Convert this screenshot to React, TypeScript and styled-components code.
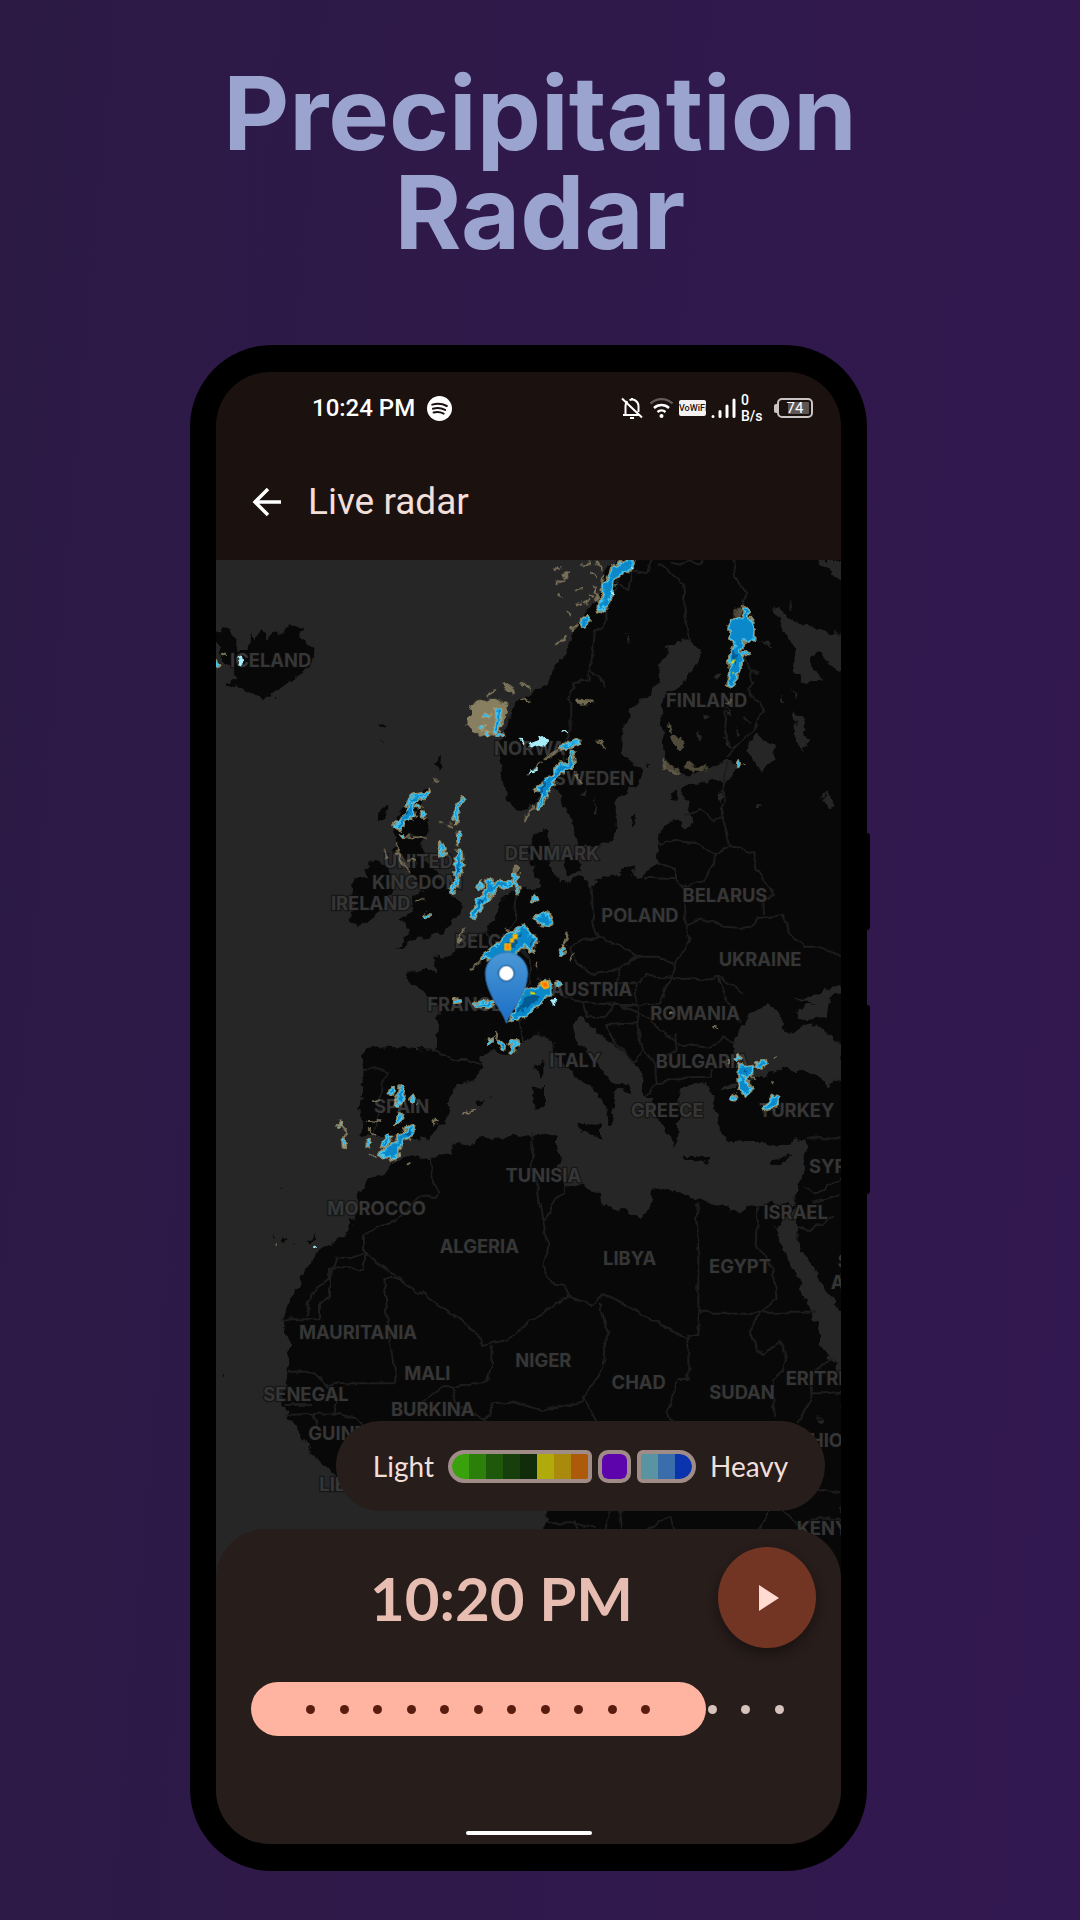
import React, { useState } from 'react';
import styled, { createGlobalStyle } from 'styled-components';

const GlobalStyle = createGlobalStyle`
  *, *::before, *::after { box-sizing: border-box; }
  body {
    margin: 0;
    font-family: Roboto, "Noto Sans", sans-serif;
    background: #2f194b;
  }
`;

const Page = styled.main`
  display: flex;
  flex-direction: column;
  align-items: center;
  min-height: 100vh;
  padding: 64px 0 49px;
  background: linear-gradient(95deg, #2c1a45 0%, #2f194b 50%, #321850 100%);
`;

const Title = styled.h1`
  max-width: 800px;
  margin: 0 0 83px;
  color: #9ba3cf;
  font: 700 102px/99px Inter, "Open Sans", sans-serif;
  text-align: center;
`;

const Stage = styled.div`
  display: flex;
  flex: 1;
  justify-content: center;
  width: 100%;
  padding-right: 23px;
`;

const Phone = styled.div`
  position: relative;
  display: flex;
  width: 100%;
  max-width: 677px;
  padding: 27px 26px;
  border-radius: 82px;
  background: #000;
`;

const SideKey = styled.span<{ $top: number; $height: number }>`
  position: absolute;
  right: -3px;
  top: ${p => p.$top}px;
  width: 8px;
  height: ${p => p.$height}px;
  border-radius: 3px;
  background: #000;
`;

const Screen = styled.section`
  display: flex;
  flex: 1;
  flex-direction: column;
  min-width: 0;
  overflow: hidden;
  border-radius: 54px;
  background: #1b110f;
`;

const StatusBar = styled.div`
  display: flex;
  align-items: center;
  height: 72px;
  padding: 0 28px 0 96px;
  color: #fff;
`;

const Clock = styled.time`
  margin-right: 12px;
  font-size: 24px;
  font-weight: 500;
  line-height: 30px;
`;

const StatusIcons = styled.div`
  display: flex;
  align-items: center;
  gap: 5px;
  margin-left: auto;
`;

const VoWifi = styled.span`
  width: 27px;
  height: 16px;
  border-radius: 2px;
  background: #f4f1f0;
  color: #1b110f;
  font: 500 9px/16px Roboto, sans-serif;
  text-align: center;
`;

const NetSpeed = styled.span`
  display: flex;
  flex-direction: column;
  width: 28px;
  font-size: 14px;
  font-weight: 500;
  line-height: 16px;
`;

const Battery = styled.span`
  display: flex;
  align-items: center;
  &::before {
    content: "";
    width: 3px;
    height: 9px;
    border-radius: 2px 0 0 2px;
    background: #c9c4c3;
  }
`;

const BatteryBody = styled.span`
  width: 36px;
  height: 20px;
  padding: 2px;
  border: 2px solid #c9c4c3;
  border-radius: 5px;
  color: #fff;
  font-size: 15px;
  line-height: 13px;
  text-align: center;
  background: linear-gradient(90deg, transparent 7px, #5d5655 7px) content-box;
`;

const AppBar = styled.header`
  display: flex;
  align-items: center;
  height: 116px;
  padding: 0 32px;
`;

const BackButton = styled.button`
  display: grid;
  place-items: center;
  width: 38px;
  height: 48px;
  margin-right: 22px;
  padding: 0;
  border: 0;
  background: none;
  cursor: pointer;
`;

const ScreenTitle = styled.h2`
  margin: 0;
  color: #f1dfda;
  font-size: 37px;
  font-weight: 400;
  line-height: 48px;
`;

const MapArea = styled.div`
  position: relative;
  flex: 1;
  min-height: 560px;
  background: #262626;
`;

const MapCanvas = styled.svg`
  position: absolute;
  inset: 0;
  width: 100%;
  height: 100%;
`;

const CountryName = styled.text`
  fill: #363636;
  stroke: #0d0d0d;
  stroke-width: 8px;
  stroke-opacity: 0.6;
  paint-order: stroke;
  font: 700 55px Inter, "Open Sans", sans-serif;
`;

const Legend = styled.div`
  position: absolute;
  right: 16px;
  bottom: 70px;
  display: flex;
  align-items: center;
  justify-content: center;
  gap: 14px;
  width: 489px;
  max-width: calc(100% - 32px);
  height: 90px;
  border-radius: 45px;
  background: #271d1b;
  color: #f1dfda;
  font: 400 28px/36px Lato, sans-serif;
`;

const Scale = styled.div`
  display: flex;
  gap: 6px;
`;

const ScaleGroup = styled.div<{ $radius: string }>`
  display: flex;
  height: 33px;
  overflow: hidden;
  border: 4px solid #a08c87;
  border-radius: ${p => p.$radius};
  background: #a08c87;
`;

const Swatch = styled.span<{ $color: string; $width: number; $radius: string }>`
  width: ${p => p.$width}px;
  border-radius: ${p => p.$radius};
  background: ${p => p.$color};
`;

const Sheet = styled.footer`
  position: relative;
  display: flex;
  flex-direction: column;
  height: 315px;
  margin-top: -52px;
  padding: 18px 25px 8px 35px;
  border-radius: 50px 50px 0 0;
  background: #271d1b;
`;

const Playback = styled.div`
  display: flex;
  align-items: center;
`;

const FrameTime = styled.output`
  flex: 1;
  padding-left: 34px;
  color: #e7bdb2;
  font: 700 60px/80px Lato, sans-serif;
  text-align: center;
`;

const PlayButton = styled.button`
  display: grid;
  place-items: center;
  width: 98px;
  height: 101px;
  padding: 0 0 0 4px;
  border: 0;
  border-radius: 50%;
  background: #723523;
  box-shadow: 0 5px 12px rgba(0, 0, 0, 0.4);
  cursor: pointer;
`;

const Timeline = styled.label`
  position: relative;
  display: flex;
  align-items: center;
  height: 54px;
  margin: 34px 10px 0 0;
`;

const TimelineFill = styled.span`
  position: absolute;
  left: 0;
  height: 54px;
  border-radius: 27px;
  background: #ffb4a1;
`;

const Ticks = styled.span`
  position: relative;
  display: flex;
  flex: 1;
  justify-content: space-between;
  padding: 0 22px;
`;

const Tick = styled.span<{ $state: 'played' | 'ahead' | 'hidden' }>`
  width: 9px;
  height: 9px;
  border-radius: 50%;
  background: ${p => (p.$state === 'played' ? '#5a1c0f' : p.$state === 'ahead' ? '#d8c2bc' : 'transparent')};
`;

const Range = styled.input`
  position: absolute;
  inset: 0;
  width: 100%;
  height: 100%;
  margin: 0;
  opacity: 0;
  cursor: pointer;
`;

const HomeBar = styled.span`
  align-self: center;
  width: 126px;
  height: 4px;
  margin: auto 0 1px -10px;
  border-radius: 2px;
  background: #fff;
`;

const LAND = [
  // Scandinavia, Europe and western Asia
  'M1240 0 L1190 60 1180 120 1140 180 1095 230 1080 290 1030 360 1000 410 970 430 930 450 905 490 885 540 870 600 872 650 878 700 892 745 920 775 950 780 985 745 1025 700 1050 715 1060 770 1100 860 1105 888 1150 880 1200 882 1212 850 1215 800 1222 750 1262 722 1290 690 1300 660 1245 620 1232 580 1242 520 1272 470 1330 420 1355 370 1350 340 1370 300 1395 270 1445 272 1472 295 1470 330 1450 350 1420 400 1370 430 1352 460 1356 520 1360 600 1372 645 1400 670 1450 670 1500 650 1550 632 1600 640 1545 695 1490 695 1420 712 1418 750 1442 770 1447 820 1422 842 1390 800 1360 830 1345 880 1345 940 1312 955 1300 985 1270 975 1262 955 1200 975 1145 1005 1110 980 1060 1000 1035 975 1010 940 1030 870 1000 835 962 870 960 930 985 1010 930 1020 900 1030 868 1060 842 1120 825 1142 760 1190 705 1222 665 1220 682 1262 585 1265 590 1292 645 1325 690 1370 685 1460 675 1500 620 1497 560 1492 490 1487 448 1510 460 1560 460 1620 440 1680 458 1700 455 1752 500 1755 530 1772 560 1742 620 1765 655 1765 700 1722 722 1690 710 1660 740 1612 800 1582 817 1560 810 1522 840 1500 880 1512 930 1482 980 1455 1020 1465 1040 1525 1085 1565 1140 1610 1180 1650 1200 1680 1180 1720 1200 1722 1222 1670 1210 1640 1232 1620 1262 1635 1258 1610 1200 1590 1150 1520 1092 1465 1085 1425 1110 1400 1135 1420 1180 1460 1240 1505 1285 1550 1298 1582 1295 1630 1322 1652 1330 1690 1360 1720 1400 1790 1392 1735 1410 1700 1400 1660 1412 1620 1470 1598 1500 1610 1502 1650 1522 1690 1532 1750 1560 1775 1620 1780 1652 1768 1690 1792 1750 1770 1792 1765 1790 1810 1780 1850 1762 1910 1750 1962 1760 2020 1765 2080 1800 2140 1900 2300 1910 0 Z',
  // Africa
  'M1750 1962 L1690 1965 1645 1962 1590 1985 1540 1965 1470 1955 1440 1940 1410 1925 1370 1910 1330 1925 1315 1950 1315 1990 1290 2005 1250 1985 1185 1965 1170 1930 1110 1910 1060 1905 1045 1850 1050 1820 1035 1780 1045 1755 1000 1745 930 1760 820 1765 740 1785 700 1820 660 1827 590 1825 545 1840 520 1875 470 1895 445 1930 435 2000 400 2060 330 2095 310 2130 285 2160 275 2200 240 2250 215 2300 235 2345 240 2430 230 2470 220 2560 225 2590 260 2630 290 2690 335 2740 410 2810 600 2790 800 2780 950 2800 1010 2850 1015 2883 995 2950 1000 3100 1900 3100 1900 2480 1835 2390 1820 2310 1780 2240 1775 2210 1730 2100 1700 2050 Z',
  // Great Britain
  'M598 745 L655 720 620 800 662 812 640 870 642 930 680 960 702 1000 722 1040 762 1062 745 1100 720 1122 700 1150 640 1162 590 1180 555 1197 600 1142 565 1112 612 1080 602 1042 640 1020 602 980 582 940 540 900 560 860 545 830 570 790 Z',
  // Ireland
  'M500 930 L540 960 545 1020 520 1080 440 1130 413 1110 440 1080 420 1040 425 990 470 982 462 955 Z',
  // Iceland
  'M18 290 L18 240 60 235 85 265 85 300 110 300 115 250 135 272 155 245 175 272 185 250 205 252 225 250 235 218 260 235 280 228 270 262 315 295 300 350 260 380 215 410 185 440 150 440 110 420 45 410 45 400 80 385 65 350 40 335 30 300 Z',
  // Hebrides, Faroes, Shetland
  'M512 785 L535 758 528 800 505 815 Z M505 520 L530 522 515 535 Z M672 640 L695 615 685 665 Z M514 565 L520 570 516 573 Z',
  // Corsica, Sardinia, Sicily
  'M975 1545 L1000 1528 1000 1570 985 1580 Z M965 1612 L1005 1605 1005 1670 975 1680 Z M1095 1718 L1170 1722 1170 1765 1130 1750 Z',
  // Crete, Cyprus, Balearics, Peloponnese
  'M1420 1813 L1500 1825 1490 1836 1420 1825 Z M1685 1835 L1745 1812 1710 1845 1688 1845 Z M792 1655 L812 1640 822 1655 805 1668 Z M835 1640 L848 1640 842 1646 Z M1350 1715 L1405 1725 1398 1785 1370 1750 Z',
  // Danish islands, Gotland, Saaremaa
  'M1062 925 L1110 920 1105 965 1070 970 Z M1262 800 L1285 790 1270 835 Z M1382 725 L1405 722 1400 745 1375 748 Z M1305 645 L1318 650 1308 658 Z',
  // Canaries and Madeira
  'M205 1915 L222 1917 215 1920 Z M218 2075 L235 2065 228 2085 Z M300 2075 L318 2048 305 2085 Z M250 2082 L260 2085 255 2092 Z M185 2058 L192 2062 188 2070 Z M38 2478 L44 2480 40 2484 Z',
];

const WATER = [
  // Black Sea, Azov, Marmara
  'M1570 1480 L1590 1430 1630 1390 1670 1365 1710 1380 1720 1410 1712 1440 1735 1450 1780 1430 1830 1430 1900 1490 1900 1590 1860 1600 1810 1582 1780 1560 1710 1560 1660 1582 1620 1590 1580 1562 1572 1522 Z',
  'M1758 1390 L1800 1355 1862 1345 1850 1400 1810 1415 1765 1410 Z',
  'M1525 1615 L1560 1598 1600 1615 1550 1625 Z',
  // White Sea and Barents coast
  'M1690 170 L1730 200 1800 230 1860 250 1900 240 1900 370 1850 330 1822 300 1800 330 1830 390 1780 400 1755 360 1752 290 1710 220 Z',
  'M1820 30 L1900 30 1900 100 1860 62 Z',
  // Ladoga, Onega and smaller lakes
  'M1612 575 L1640 555 1690 590 1698 625 1650 665 1622 620 Z',
  'M1750 485 L1775 500 1780 530 1800 580 1782 605 1752 570 1760 540 Z',
  'M1830 740 L1850 725 1875 765 1862 778 Z M1525 730 L1545 735 1535 765 Z M1640 765 L1660 765 1650 775 Z M1110 730 L1130 715 1120 745 Z M1145 780 L1160 740 1150 790 Z',
  'M1515 365 L1540 375 1522 392 Z M1710 440 L1730 455 1715 455 Z M1660 265 L1690 290 1672 285 Z M1740 405 L1760 450 1750 445 Z M1240 245 L1262 280 1245 265 Z',
  'M1460 540 L1475 560 1468 580 Z M1540 560 L1570 590 1545 585 Z M1550 470 L1565 500 1545 495 Z M1480 490 L1500 500 1482 510 Z M1575 530 L1590 550 1580 560 Z',
  'M1400 1655 L1440 1610 1500 1605 1505 1650 1440 1660 Z',
  // Gulf of Suez and Aqaba, Red Sea
  'M1686 2020 L1735 2090 1765 2080 1800 2140 1830 2200 1870 2250 1900 2320 1900 2470 1835 2390 1820 2310 1780 2240 1775 2210 1725 2105 Z',
  'M1755 1350 L1830 1330 1890 1300 1900 1320 1830 1355 Z',
  'M1820 2605 L1835 2602 1828 2620 Z',
];

const BORDERS = [
  'M1240 60 L1205 140 1180 230 1155 245 1145 330 1135 360 1140 390 1090 400 1080 440 1082 540 1060 590 1062 660',
  'M1140 360 L1170 385 1182 415 M1200 90 L1255 120 1265 60 1310 70 1325 30 M1350 40 L1420 100 1425 190 1440 270 M1380 35 L1410 45 1440 30 1470 45 1490 20',
  'M1570 30 L1575 80 1610 130 1590 180 1602 250 1600 310 1630 400 1615 420 1658 475 1640 530 1550 620',
  'M1550 632 L1545 700 1535 790 1560 885 M1420 795 L1470 780 1510 810 1542 800 M1345 885 L1400 872 1460 880 1515 915 1560 885 1630 905 1640 960 1670 1005 1692 1035 1660 1050 1662 1095',
  'M1345 940 L1395 955 1395 985 1300 980 M1395 985 L1420 1010 1480 990 1512 940 1515 915 M1418 1005 L1425 1110 1438 1170 1395 1240 1385 1280',
  'M1425 1130 L1470 1105 1540 1130 1620 1135 1640 1105 1720 1095 1740 1150 1780 1190 1830 1190 1895 1220',
  'M1145 1005 L1150 1120 1165 1160 1120 1170 1080 1190 1100 1240 1140 1270 1225 1260 1280 1220 1240 1190 1165 1160',
  'M1280 1220 L1340 1220 1390 1240 M1225 1260 L1225 1300 1290 1295 1310 1275 1385 1280 1420 1290 1500 1285 1525 1280 1600 1330 M1225 1300 L1280 1300 1280 1370',
  'M1525 1280 L1550 1350 1590 1420 M1385 1280 L1350 1360 1285 1365 1220 1365 1150 1360 1060 1340 980 1280',
  'M1120 1355 L1130 1400 1180 1405 1215 1360 1300 1395 1350 1440 1400 1480 1500 1490 1540 1465 1570 1480',
  'M1185 1425 L1280 1420 1300 1500 1270 1540 1245 1510 1210 1470 Z M1280 1420 L1285 1370 M1300 1500 L1335 1540 1400 1500 1395 1450 M1335 1540 L1340 1600 1310 1640 M1340 1600 L1400 1590 1430 1582 1500 1580 1510 1560',
  'M920 1030 L915 1100 890 1160 960 1230 960 1300 930 1340 960 1360 930 1420 940 1480 M820 1145 L880 1190 940 1200 960 1230',
  'M675 1500 L720 1530 770 1530 810 1542 M458 1560 L520 1558 535 1575 515 1600 510 1680 490 1750',
  'M660 1830 L670 1900 688 1925 680 1940 630 1940 560 2010 500 2030 462 2060 462 2155 360 2155 360 2240 330 2255 330 2308 M215 2308 L330 2308 M462 2110 L420 2125 380 2122 360 2180 300 2240 290 2300 M462 2110 L575 2190 750 2310 815 2365 815 2385 890 2370 960 2315 1075 2237 1150 2265 1165 2240 1195 2238 1435 2370',
  'M575 2187 L523 2187 535 2330 557 2470 555 2500 440 2500 380 2500 350 2510 330 2480 290 2465 232 2465',
  'M845 2385 L843 2450 830 2495 745 2510 700 2512 640 2550 630 2580 M725 2512 L740 2560 790 2590 828 2610 850 2560 900 2555 960 2570 1000 2582 1050 2565 1085 2568 1120 2555 1122 2540 1180 2455 1192 2345 1168 2255',
  'M968 1750 L965 1850 990 1950 1000 2010 1012 2090 1000 2150 1025 2200 1060 2205 1075 2237 M1062 1905 L1062 1930 1022 1960 1025 1990 1000 2010',
  'M1465 1955 L1458 2010 1465 2050 1465 2352 1435 2352 1435 2490 1400 2490 1385 2560 1372 2590 1395 2630 M1465 2288 L1815 2288',
  'M1645 1965 L1640 2090 1690 2150 1700 2250 1640 2300 1622 2340 1640 2400 1662 2415 1710 2370 1730 2420 1720 2460 1685 2490 1695 2600',
  'M1865 2425 L1820 2460 1802 2500 1805 2550 1760 2620 M1805 2530 L1840 2530 1895 2525 M1790 1765 L1900 1765 M1785 1910 L1820 1930 1895 1885 M1810 1960 L1895 1935 M1760 2030 L1800 2040 1870 2000',
  'M225 2565 L310 2565 M225 2595 L370 2590 380 2550 350 2510 M370 2590 L440 2605 470 2640 M310 2590 L320 2630 M1122 2540 L1150 2600 1170 2650 M1225 2740 L1290 2720 1350 2740',
  'M1010 2920 L1110 2920 1160 2935 M1090 2910 L1110 2950 M1200 2880 L1180 2950 M1240 2980 L1230 2880 1280 2850 M1300 2950 L1380 2900 1400 2960 M1680 2880 L1670 2900 1620 2980 M1710 2870 L1770 2930 1820 2900 1895 2910 M1770 2760 L1830 2820 1890 2830',
  'M1550 480 L1545 540 1560 590 M1620 360 L1650 370 M1600 500 L1620 520 M1870 240 L1890 260 M1740 150 L1745 180',
];

const RAIN = [
  'M1265 30 L1210 55 1195 90 1175 110 1190 130 1165 175 1175 180 1205 130 1210 90 1240 65 1270 50 Z',
  'M1115 220 L1130 200 1125 225 Z',
  'M1605 170 L1605 205 1565 215 1562 260 1580 285 1562 320 1565 370 1555 400 1565 405 1590 350 1592 310 1585 290 1600 270 1628 270 1630 230 1612 205 1612 175 Z',
  'M1600 312 L1615 310 Z',
  'M1055 588 L1100 578 1062 592 Z M1085 605 L1078 645 1050 645 1010 700 980 712 1000 730 985 775 998 750 1030 690 1065 655 1090 645 Z',
  'M862 475 L870 480 862 540 852 542 862 510 Z M822 500 L835 496 Z M812 535 L820 530 Z M860 555 L875 555 M830 550 L832 554',
  'M658 725 L640 745 648 735 605 742 595 780 558 830 568 832 600 795 612 800 600 755 625 745 Z M620 768 L626 770',
  'M758 745 L740 770 738 815 742 775 Z M745 852 L747 875 M748 900 L754 940 742 990 725 1025 740 1000 742 940 Z',
  'M692 885 L700 915 Z M574 858 L578 862 M645 1102 L655 1098 M636 800 L642 790',
  'M905 1000 L870 995 845 1010 838 990 830 1015 825 1040 800 1060 787 1098 795 1098 828 1045 850 1016 880 1008 Z M812 1000 L810 1015 M915 975 L917 1000 925 1028',
  'M945 1128 L905 1150 860 1185 818 1224 855 1222 918 1205 942 1180 965 1200 975 1170 952 1150 Z',
  'M975 1105 L1010 1092 1022 1120 998 1118 Z M968 1055 L973 1040 M1054 1208 L1060 1192',
  'M1010 1292 L990 1300 990 1318 945 1318 905 1408 938 1398 985 1360 1020 1330 1018 1305 Z M1038 1305 L1048 1302',
  'M737 1354 L748 1350 M797 1366 L850 1355 835 1366 Z',
  'M837 1480 L843 1474 M870 1480 L880 1485 878 1500 870 1492 Z M900 1480 L925 1478 M912 1482 L910 1508',
  'M542 1625 L547 1617 548 1632 Z M576 1615 L582 1628 570 1655 562 1650 Z M556 1668 L560 1664 M575 1695 L557 1720 562 1708 Z M606 1645 L613 1653',
  'M608 1730 L602 1756 578 1765 562 1800 560 1815 548 1828 540 1812 512 1818 530 1795 562 1780 568 1755 590 1742 Z M536 1762 L530 1780 516 1785 Z',
  'M390 1720 L394 1728 M402 1767 L403 1785 M475 1775 L474 1788',
  'M1582 1528 L1587 1522 M1592 1547 L1622 1552 1622 1570 1595 1575 1600 1592 1622 1615 1605 1630 1592 1618 1590 1580 Z M1642 1545 L1665 1537 1655 1550 Z',
  'M1688 1642 L1703 1642 1698 1668 1665 1676 1682 1660 Z M1570 1640 L1574 1640 M1586 643 L1590 636',
  'M18 342 L20 347',
].join(' ');

const DEEP_RAIN = 'M985 1330 L950 1340 915 1395 950 1375 980 1350 Z M1010 685 L990 715 985 735 1005 710 Z M930 1150 L890 1185 920 1185 Z M600 1738 L580 1750 598 1755 Z M1570 305 L1585 310 1572 350 Z M960 1165 L970 1172 965 1190 Z M575 800 L590 775 595 785 Z M797 1085 L815 1050 822 1052 Z M1600 1555 L1615 1558 1605 1566 Z M745 930 L750 960 745 975 Z';

const ICE = [
  'M932 572 L940 578 M960 580 L1000 564 1008 575 1002 586 980 588 Z M1052 548 L1068 543',
  'M82 325 L90 320 94 338 Z M962 665 L980 660 M1207 130 L1211 132 M1270 52 L1273 54 M1030 1358 L1038 1352 M313 2091 L317 2092',
];

const DUST = [
  'M790 460 L850 450 890 465 880 520 850 550 800 550 775 520 Z',
  'M880 400 L905 415 910 430 890 420 Z M935 400 L960 415 M930 445 L960 455 M1100 452 L1150 455 1110 458 Z M830 435 L855 420',
  'M1385 560 L1410 565 1425 590 1400 595 Z M1365 630 L1380 650 1410 665 1400 672 1360 655 Z M1375 520 L1385 545',
  'M1425 655 L1440 635 1450 655 1490 650 1470 662 Z M1550 460 L1560 455 M1570 240 L1580 180 1600 180',
  'M1010 625 L1060 590 1110 572 M995 635 L960 670 M945 810 L970 770 M1095 670 L1112 700 M1160 573 L1185 588',
  'M1030 60 L1045 50 M1060 80 L1080 70 M1045 135 L1055 142 M1100 120 L1115 115 M1140 65 L1160 80 M1070 190 L1085 195 M1100 165 L1110 158 M1085 240 L1100 225 M1035 285 L1070 260 M1125 160 L1135 150 M1120 45 L1145 40 M1160 35 L1175 60 M1040 100 L1060 90 M1150 110 L1165 150 M1180 80 L1170 100 M1140 130 L1150 140',
  'M560 880 L570 930 600 970 M590 860 L650 865 M690 815 L700 815 M715 820 L725 830 M525 900 L530 920 M600 930 L620 935 M675 692 L682 692 M625 1048 L640 1048',
  'M745 1175 L760 1140 M780 1255 L810 1235 M918 950 L915 985 M890 1140 L905 1150 M980 1240 L985 1250 M1060 1180 L1070 1150 M1085 1230 L1090 1215',
  'M855 1450 L845 1480 M858 1450 L865 1470 M490 1650 L500 1648 M670 1725 L680 1710 M480 1740 L495 1750 M480 1710 L510 1715 M765 1690 L795 1680 M590 1845 L600 1838 M485 1815 L495 1820 M392 1718 L408 1745 404 1790',
  'M1625 1565 L1640 1540 M1690 1595 L1692 1605 M1552 1535 L1556 1540 M1690 1525 L1700 1522 M1380 1390 L1382 1395 M1510 1435 L1522 1433 M40 312 L48 312 M198 2083 L204 2084 M1625 1580 L1635 1590',
];

const HEAVY: { d: string; color: string }[] = [
  { d: 'M883 1180 L900 1180 900 1165 908 1165 908 1152 923 1152 923 1167 912 1167 912 1178 903 1178 903 1202 883 1202 Z', color: '#ffb400' },
  { d: 'M887 1183 L898 1183 898 1198 887 1198 Z', color: '#ff8a00' },
  { d: 'M992 1293 L1015 1293 1018 1314 1003 1318 992 1308 Z', color: '#ffae00' },
  { d: 'M997 1298 L1010 1298 1012 1312 1000 1308 Z', color: '#ff6a00' },
  { d: 'M960 1325 L975 1328 978 1334 962 1332 Z M938 1330 L944 1332 940 1335 Z', color: '#e8dc00' },
  { d: 'M1563 340 L1568 330 1577 328 1570 340 Z M1567 365 L1573 368 1568 373 Z', color: '#f4e800' },
];

type Anchor = 'start' | 'middle';
const COUNTRIES: [string, number, number, Anchor?][] = [
  ['ICELAND', 182, 352], ['FINLAND', 1490, 472], ['NORWAY', 852, 615, 'start'], ['SWEDEN', 1152, 706],
  ['DENMARK', 1026, 931], ['UNITED', 625, 955], ['KINGDOM', 622, 1018], ['IRELAND', 482, 1080],
  ['BELARUS', 1545, 1055], ['POLAND', 1290, 1117], ['UKRAINE', 1650, 1247], ['BELGIUM', 858, 1195],
  ['AUSTRIA', 1144, 1337], ['FRANCE', 652, 1384, 'start'], ['ROMANIA', 1455, 1410], ['ITALY', 1095, 1552],
  ['BULGARIA', 1477, 1555], ['GREECE', 1372, 1702], ['TURKEY', 1760, 1702], ['SPAIN', 575, 1690],
  ['TUNISIA', 1000, 1896], ['SYRIA', 1797, 1868, 'start'], ['ISRAEL', 1757, 2007], ['MOROCCO', 500, 1995],
  ['ALGERIA', 808, 2108], ['LIBYA', 1259, 2144], ['EGYPT', 1590, 2168], ['SAUDI', 1883, 2155, 'start'],
  ['ARABIA', 1862, 2217, 'start'], ['MAURITANIA', 444, 2368], ['MALI', 652, 2490], ['NIGER', 1000, 2450],
  ['CHAD', 1286, 2516], ['SUDAN', 1596, 2548], ['ERITREA', 1727, 2504, 'start'], ['SENEGAL', 288, 2553],
  ['BURKINA', 668, 2598], ['GUINEA', 295, 2670, 'start'], ['LIBERIA', 328, 2822, 'start'],
  ['ETHIOPIA', 1730, 2690, 'start'], ['KENYA', 1760, 2955, 'start'],
];

function RadarMap() {
  return (
    <MapCanvas viewBox="18 30 1875 3063" preserveAspectRatio="xMidYMid slice" role="img" aria-label="Precipitation map of Europe and North Africa">
      <defs>
        <filter id="coast" x="0" y="0" width="1920" height="3120" filterUnits="userSpaceOnUse" colorInterpolationFilters="sRGB">
          <feTurbulence type="fractalNoise" baseFrequency="0.03" numOctaves="3" seed="4" />
          <feDisplacementMap in="SourceGraphic" scale="34" xChannelSelector="R" yChannelSelector="G" />
        </filter>
        <filter id="frontier" x="0" y="0" width="1920" height="3120" filterUnits="userSpaceOnUse" colorInterpolationFilters="sRGB">
          <feTurbulence type="fractalNoise" baseFrequency="0.03" numOctaves="2" seed="9" />
          <feDisplacementMap in="SourceGraphic" scale="20" xChannelSelector="R" yChannelSelector="G" />
        </filter>
        <filter id="cell" x="0" y="0" width="1920" height="3120" filterUnits="userSpaceOnUse" colorInterpolationFilters="sRGB">
          <feTurbulence type="fractalNoise" baseFrequency="0.05" numOctaves="2" seed="2" />
          <feDisplacementMap in="SourceGraphic" scale="26" xChannelSelector="R" yChannelSelector="G" />
        </filter>
        <linearGradient id="pin" x1="0" y1="0" x2="0" y2="1">
          <stop offset="0" stopColor="#4b98d6" />
          <stop offset="1" stopColor="#1b6fc6" />
        </linearGradient>
      </defs>
      <g filter="url(#coast)">
        {LAND.map(d => <path key={d} d={d} fill="#080808" />)}
        {WATER.map(d => <path key={d} d={d} fill="#262626" />)}
      </g>
      <g filter="url(#frontier)" fill="none" stroke="#1d1d1d" strokeWidth="6" strokeLinejoin="round">
        {BORDERS.map(d => <path key={d} d={d} />)}
      </g>
      {COUNTRIES.map(([name, x, y, anchor]) => (
        <CountryName key={name} x={x} y={y} textAnchor={anchor ?? 'middle'}>{name}</CountryName>
      ))}
      <g filter="url(#cell)" strokeLinejoin="round" strokeLinecap="round">
        {DUST.map((d, i) => (
          <path key={d} d={d} fill={i < 4 ? '#948a68' : 'none'} stroke="#948a68" strokeWidth="7" opacity={i === 0 ? 0.9 : i === 2 || i === 3 ? 0.5 : 0.75} />
        ))}
        <path d={RAIN} fill="none" stroke="#a3966c" strokeWidth="17" opacity="0.85" />
        <path d={RAIN} fill="none" stroke="#4cc8f0" strokeWidth="9" />
        <path d={RAIN} fill="#0a88c9" stroke="#129bd9" strokeWidth="2" />
        <path d={DEEP_RAIN} fill="#045a93" />
        {ICE.map(d => <path key={d} d={d} fill="#a8ecf7" stroke="#a8ecf7" strokeWidth="7" />)}
      </g>
      {HEAVY.map(h => <path key={h.d} d={h.d} fill={h.color} />)}
      <path d="M889 1419 C880 1384 826 1330 826 1270 A63 63 0 0 1 953 1270 C953 1330 900 1384 889 1419 Z" fill="url(#pin)" stroke="#2c72b0" strokeWidth="3" />
      <circle cx="889" cy="1270" r="24" fill="#fff" stroke="#2d6da8" strokeWidth="5" />
    </MapCanvas>
  );
}

const SCALE = [
  { radius: '17px 6px 6px 17px', colors: ['#38a10b', '#2d7f0b', '#1e580b', '#173f0b', '#112c0a', '#b0ab0b', '#aa8a0c', '#ad5a0b'] },
  { radius: '10px', colors: ['#5d04ad'] },
  { radius: '6px 17px 17px 6px', colors: ['#5a94a2', '#3a6dab', '#0934ae'] },
];

const swatchRadius = (group: number, index: number, last: boolean) =>
  group === 1 ? '6px' : group === 0 && index === 0 ? '13px 0 0 13px' : group === 2 && last ? '0 13px 13px 0' : '0';

const LAST_FRAME = 15;

export default function App() {
  const [frame, setFrame] = useState(12);
  const minutes = 22 * 60 + 20 + (frame - 12) * 10;
  const hour = Math.floor(minutes / 60);
  const label = `${hour > 12 ? hour - 12 : hour}:${String(minutes % 60).padStart(2, '0')} PM`;

  return (
    <>
      <GlobalStyle />
      <Page>
        <Title>Precipitation Radar</Title>
        <Stage>
          <Phone>
            <SideKey $top={488} $height={97} />
            <SideKey $top={660} $height={189} />
            <Screen>
              <StatusBar>
                <Clock>10:24 PM</Clock>
                <svg width="25" height="25" viewBox="0 0 24 24" aria-label="Spotify">
                  <circle cx="12" cy="12" r="12" fill="#fff" />
                  <path d="M5 8.3c4.800-1.300 10-.8 14 1.300M5.700 12.200c4-1.100 8.300-.6 11.700 1.200M6.300 15.800c3.400-.8 6.800-.4 9.700 1.100" fill="none" stroke="#1b110f" strokeWidth="1.900" strokeLinecap="round" />
                </svg>
                <StatusIcons>
                  <svg width="24" height="24" viewBox="0 0 24 24" fill="none" stroke="#fff" strokeWidth="2" aria-label="Notifications muted">
                    <path d="M5.500 19V10a6.500 6.500 0 0 1 2-4.700M9.500 4.100A6.500 6.500 0 0 1 18.500 10v6M3 19h15.500M2 2.500l20 19" />
                    <path d="M10 22h4M12 4V2" />
                  </svg>
                  <svg width="25" height="24" viewBox="0 0 25 24" fill="none" strokeWidth="2.400" aria-label="Wi-Fi">
                    <path d="M1.500 7.500a16 16 0 0 1 22 0" stroke="#655c5a" />
                    <path d="M5 12a11 11 0 0 1 15 0M8.500 16a6 6 0 0 1 8 0" stroke="#fff" />
                    <circle cx="12.500" cy="20" r="2" fill="#fff" />
                  </svg>
                  <VoWifi>VoWiFi</VoWifi>
                  <svg width="25" height="22" viewBox="0 0 25 22" stroke="#fff" strokeWidth="3" strokeLinecap="round" aria-label="Signal">
                    <path d="M2 19.500v0M9 19.500v-5M16 19.500V9M23 19.500V3" />
                  </svg>
                  <NetSpeed><span>0</span><span>B/s</span></NetSpeed>
                  <Battery><BatteryBody>74</BatteryBody></Battery>
                </StatusIcons>
              </StatusBar>
              <AppBar>
                <BackButton aria-label="Back">
                  <svg width="30" height="30" viewBox="0 0 30 30" fill="none" stroke="#fff" strokeWidth="3.500">
                    <path d="M29 15H4M16 2L3 15l13 13" />
                  </svg>
                </BackButton>
                <ScreenTitle>Live radar</ScreenTitle>
              </AppBar>
              <MapArea>
                <RadarMap />
                <Legend>
                  <span>Light</span>
                  <Scale>
                    {SCALE.map((group, g) => (
                      <ScaleGroup key={g} $radius={group.radius}>
                        {group.colors.map((color, i) => (
                          <Swatch key={color} $color={color} $width={g === 1 ? 25 : 17} $radius={swatchRadius(g, i, i === group.colors.length - 1)} />
                        ))}
                      </ScaleGroup>
                    ))}
                  </Scale>
                  <span>Heavy</span>
                </Legend>
              </MapArea>
              <Sheet>
                <Playback>
                  <FrameTime htmlFor="frame">{label}</FrameTime>
                  <PlayButton aria-label="Play">
                    <svg width="20" height="26" viewBox="0 0 20 26"><path d="M0 0l20 13L0 26z" fill="#ffdbd1" /></svg>
                  </PlayButton>
                </Playback>
                <Timeline htmlFor="frame" aria-label="Radar frame">
                  <TimelineFill style={{ width: `calc(54px + (100% - 54px) * ${frame / LAST_FRAME})` }} />
                  <Ticks>
                    {Array.from({ length: LAST_FRAME + 1 }, (_, i) => (
                      <Tick key={i} $state={i === 0 || i === frame ? 'hidden' : i < frame ? 'played' : 'ahead'} />
                    ))}
                  </Ticks>
                  <Range id="frame" type="range" min={0} max={LAST_FRAME} value={frame} onChange={e => setFrame(Number(e.target.value))} />
                </Timeline>
                <HomeBar />
              </Sheet>
            </Screen>
          </Phone>
        </Stage>
      </Page>
    </>
  );
}
